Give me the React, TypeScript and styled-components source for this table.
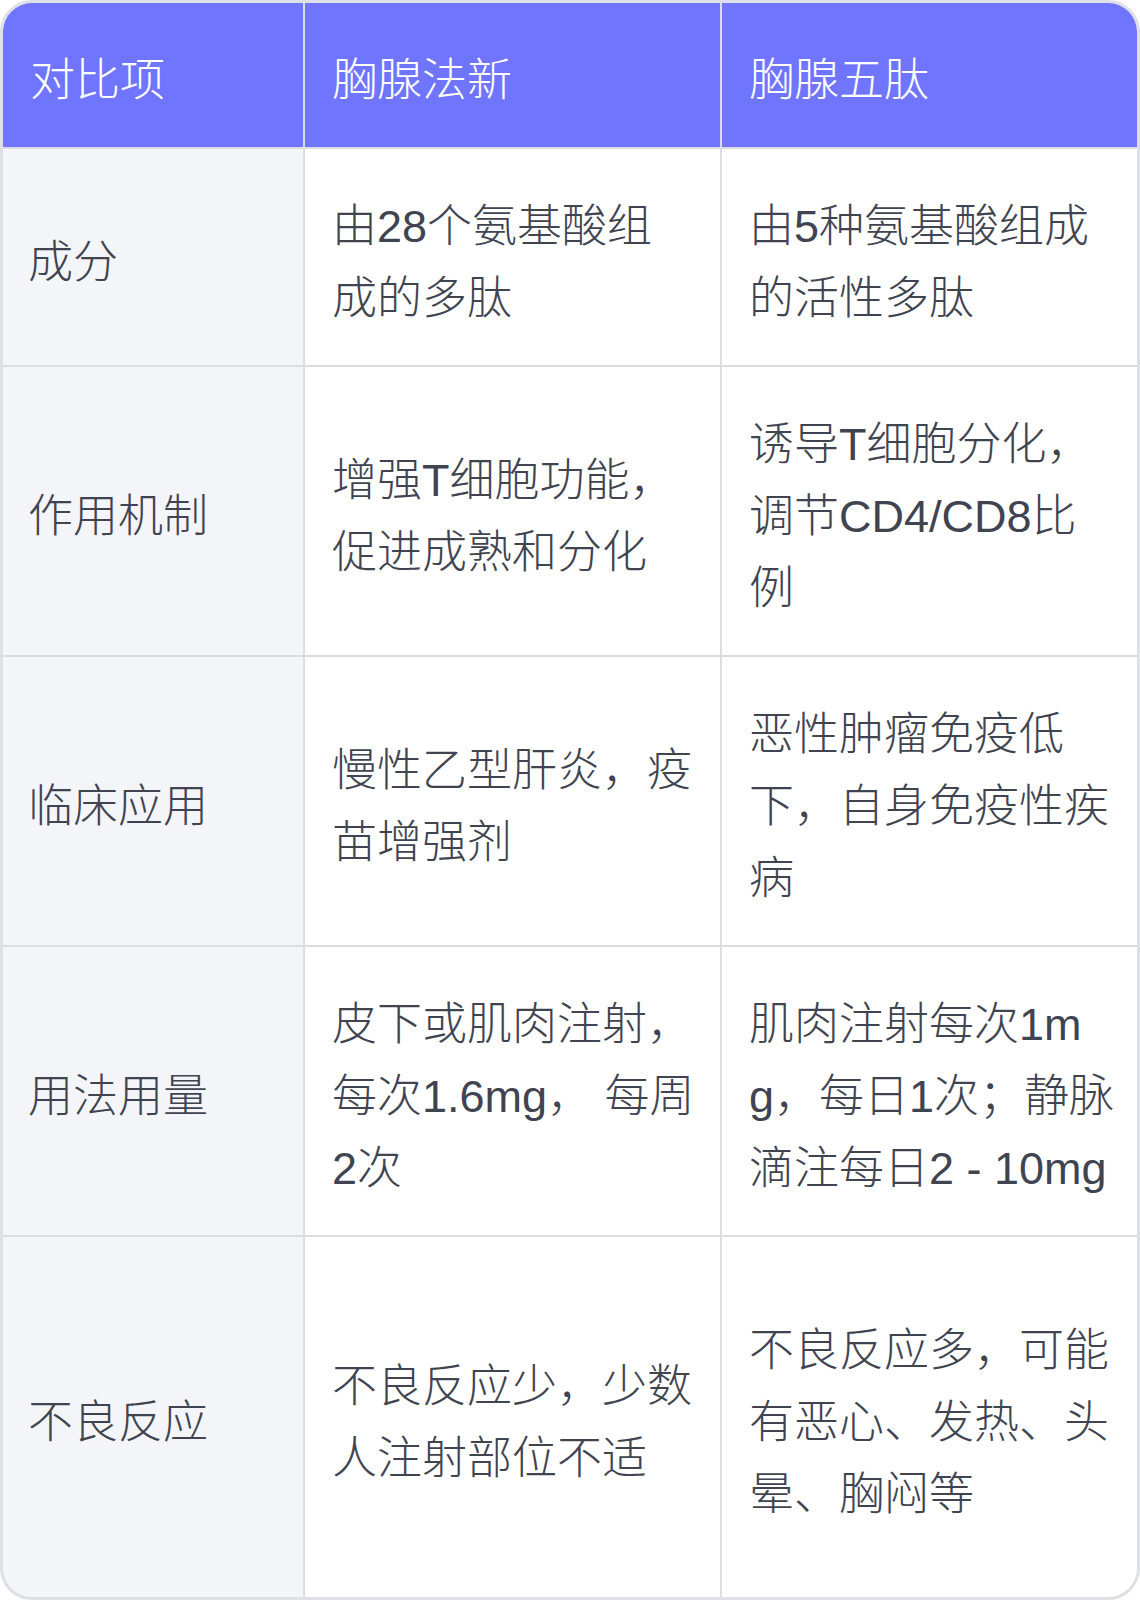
import React from "react";
import styled, { createGlobalStyle } from "styled-components";

const GlobalStyle = createGlobalStyle`
  html, body {
    margin: 0;
    padding: 0;
    background: #ffffff;
  }
  * { box-sizing: border-box; }
`;

const Frame = styled.div`
  width: 1140px;
  height: 1600px;
  border: 3px solid #dfe0e5;
  border-radius: 32px;
  overflow: hidden;
  background: #dcdde2;
`;

const Grid = styled.div`
  display: grid;
  height: 100%;
  grid-template-columns: 300px 415px 1fr;
  grid-template-rows: 144px 216px 288px 288px 288px 1fr;
  gap: 2px;
  background: #dcdde2;
`;

type Kind = "head" | "label" | "mid" | "last";

const Cell = styled.div<{ $kind: Kind }>`
  display: flex;
  align-items: center;
  padding: 11px ${(p) => (p.$kind === "last" ? "20px" : "24px")} 0
    ${(p) => (p.$kind === "label" ? "25px" : "27px")};
  font-family: "Liberation Sans", "Noto Sans CJK SC", sans-serif;
  font-size: 45px;
  line-height: 72px;
  font-weight: 300;
  word-break: break-all;
  color: ${(p) => (p.$kind === "head" ? "#ffffff" : "#3f4450")};
  background: ${(p) =>
    p.$kind === "head" ? "#7075ff" : p.$kind === "label" ? "#f4f5f9" : "#ffffff"};
`;

const headers = ["对比项", "胸腺法新", "胸腺五肽"];

const rows: [string, string, string][] = [
  ["成分", "由28个氨基酸组成的多肽", "由5种氨基酸组成的活性多肽"],
  ["作用机制", "增强T细胞功能，促进成熟和分化", "诱导T细胞分化，调节CD4/CD8比例"],
  ["临床应用", "慢性乙型肝炎，疫苗增强剂", "恶性肿瘤免疫低下，自身免疫性疾病"],
  ["用法用量", "皮下或肌肉注射，每次1.6mg， 每周2次", "肌肉注射每次1mg，每日1次；静脉滴注每日2 - 10mg"],
  ["不良反应", "不良反应少，少数人注射部位不适", "不良反应多，可能有恶心、发热、头晕、胸闷等"],
];

export default function App() {
  return (
    <>
      <GlobalStyle />
      <Frame>
        <Grid>
          {headers.map((h) => (
            <Cell key={h} $kind="head">
              {h}
            </Cell>
          ))}
          {rows.map((r) => (
            <React.Fragment key={r[0]}>
              <Cell $kind="label">{r[0]}</Cell>
              <Cell $kind="mid">{r[1]}</Cell>
              <Cell $kind="last">{r[2]}</Cell>
            </React.Fragment>
          ))}
        </Grid>
      </Frame>
    </>
  );
}
